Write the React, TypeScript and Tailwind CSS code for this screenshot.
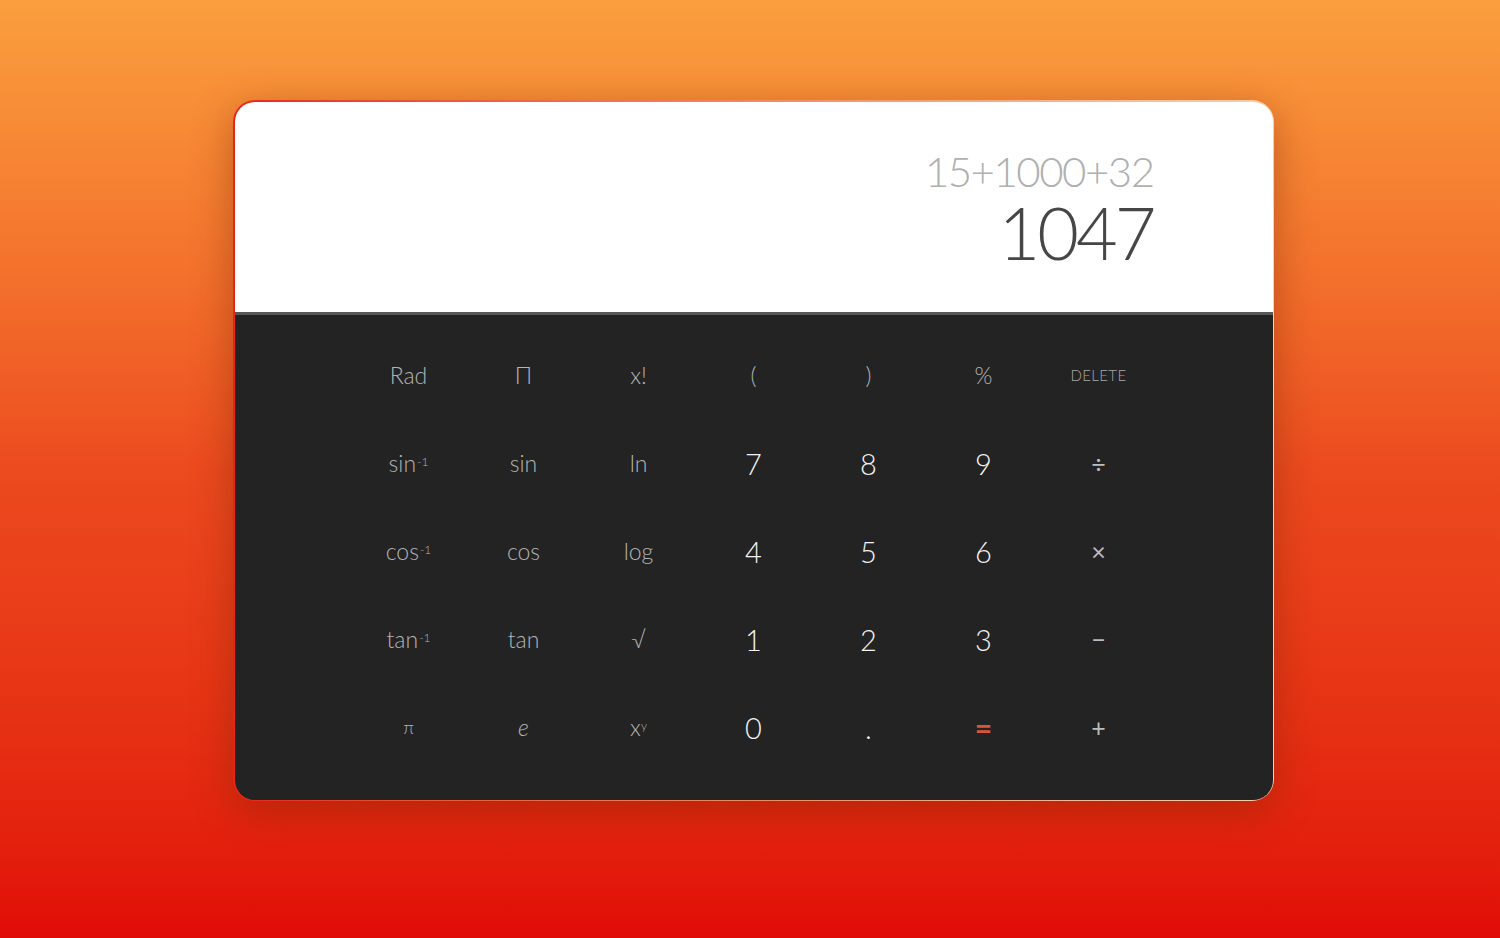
import React from 'react';

type Key = { label: React.ReactNode; kind: 'fn' | 'num' | 'op' | 'eq' | 'del' };

const sup = (base: string) => (
  <span>
    {base}
    <sup className="text-[12px] relative -top-[6px] ml-[1px]">-1</sup>
  </span>
);

const rows: Key[][] = [
  [
    { label: 'Rad', kind: 'fn' },
    { label: 'Π', kind: 'fn' },
    { label: 'x!', kind: 'fn' },
    { label: '(', kind: 'fn' },
    { label: ')', kind: 'fn' },
    { label: '%', kind: 'fn' },
    { label: 'DELETE', kind: 'del' },
  ],
  [
    { label: sup('sin'), kind: 'fn' },
    { label: 'sin', kind: 'fn' },
    { label: 'ln', kind: 'fn' },
    { label: '7', kind: 'num' },
    { label: '8', kind: 'num' },
    { label: '9', kind: 'num' },
    { label: '÷', kind: 'op' },
  ],
  [
    { label: sup('cos'), kind: 'fn' },
    { label: 'cos', kind: 'fn' },
    { label: 'log', kind: 'fn' },
    { label: '4', kind: 'num' },
    { label: '5', kind: 'num' },
    { label: '6', kind: 'num' },
    { label: '×', kind: 'op' },
  ],
  [
    { label: sup('tan'), kind: 'fn' },
    { label: 'tan', kind: 'fn' },
    { label: '√', kind: 'fn' },
    { label: '1', kind: 'num' },
    { label: '2', kind: 'num' },
    { label: '3', kind: 'num' },
    { label: '−', kind: 'op' },
  ],
  [
    { label: <span className="text-[18px]">π</span>, kind: 'fn' },
    { label: <span className="italic">e</span>, kind: 'fn' },
    {
      label: (
        <span>
          x<sup className="text-[12px] relative -top-[6px]">y</sup>
        </span>
      ),
      kind: 'fn',
    },
    { label: '0', kind: 'num' },
    { label: '.', kind: 'num' },
    { label: '=', kind: 'eq' },
    { label: '+', kind: 'op' },
  ],
];

const keyClass = (kind: Key['kind']) => {
  switch (kind) {
    case 'num':
      return 'text-[29px] text-[#f2f2f2] font-light';
    case 'op':
      return 'text-[25px] text-[#bdbdbd] font-normal';
    case 'eq':
      return 'text-[30px] text-[#d9553a] font-bold';
    case 'del':
      return 'text-[15px] text-[#a8a8a8] font-light tracking-wide';
    default:
      return 'text-[23px] text-[#b3b3b3] font-light';
  }
};

export default function App() {
  return (
    <div className="min-h-[938px] w-full bg-gradient-to-b from-[#fa9f3e] via-[#ec4a1f] to-[#e10a07] pl-[233px] pt-[100px] font-['Lato','DejaVu_Sans',sans-serif]">
      <div className="w-[1041px] h-[701px] rounded-[22px] p-[1.5px] bg-gradient-to-r from-[#e8231a] via-[#f08a60] to-[#f6d0b0] shadow-[0_10px_40px_rgba(120,40,0,0.45)]">
        <div className="w-full h-full rounded-[20px] overflow-hidden flex flex-col">
          {/* display */}
          <div className="h-[210px] bg-white flex flex-col items-end justify-end pr-[119px] pb-[44px]">
            <div className="text-[42px] leading-none font-light text-[#b0b0b0] tracking-[-1.5px]">15+1000+32</div>
            <div className="text-[72px] leading-none font-light text-[#464646] tracking-[-3px] mt-[4px]">1047</div>
          </div>
          <div className="h-[3px] bg-[#575757]" />
          {/* keypad */}
          <div className="flex-1 bg-[#232323] pt-[17px]">
            <div className="w-[805px] mx-auto grid grid-cols-7">
              {rows.flat().map((k, i) => (
                <button
                  key={i}
                  className={`h-[88px] flex items-center justify-center ${keyClass(k.kind)}`}
                >
                  {k.label}
                </button>
              ))}
            </div>
          </div>
        </div>
      </div>
    </div>
  );
}
